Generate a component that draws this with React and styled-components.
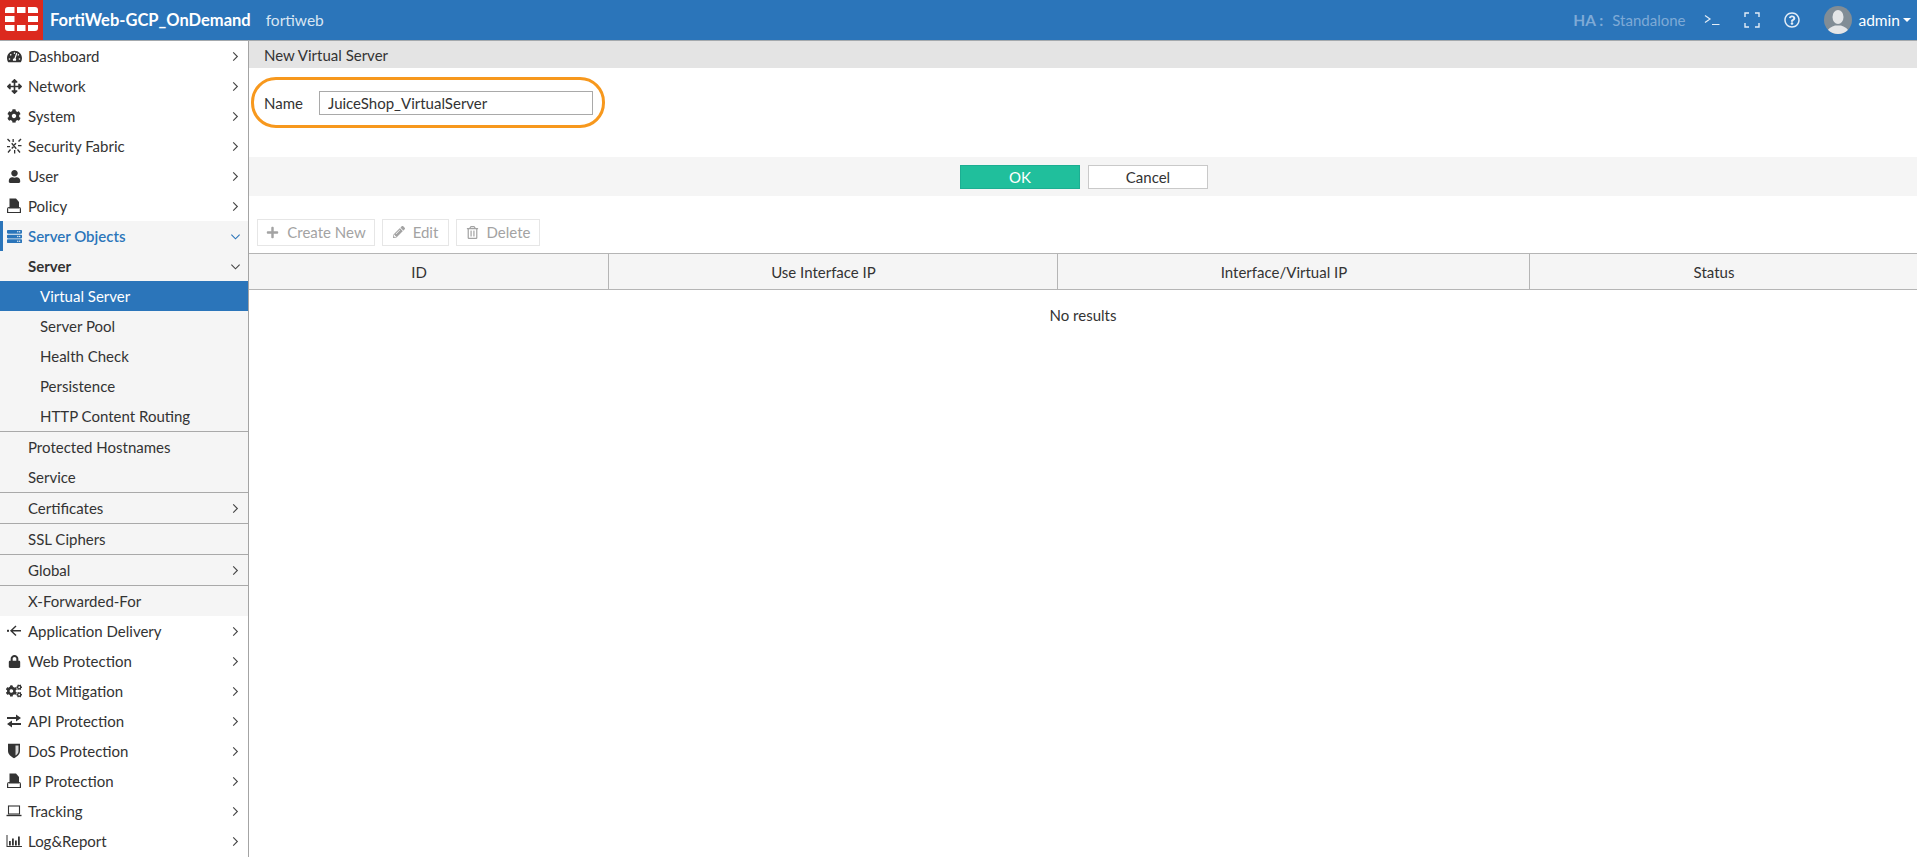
import React from 'react'
import styled, { createGlobalStyle } from 'styled-components'
import {
  FaTachometerAlt, FaArrowsAlt, FaCog, FaUser, FaServer, FaLock, FaCogs,
  FaPlus, FaPencilAlt, FaRegTrashAlt, FaRegQuestionCircle,
} from 'react-icons/fa'

const GlobalStyle = createGlobalStyle`
  html, body { margin: 0; padding: 0; height: 100%; background: #fff; }
  body { font-family: Lato, "Open Sans", sans-serif; font-size: 15px; color: #333; overflow: hidden; }
  * { box-sizing: border-box; }
`

const Page = styled.div`
  height: 100vh;
  display: flex;
  flex-direction: column;
`

const Header = styled.header`
  height: 41px;
  flex: none;
  display: flex;
  align-items: center;
  background: #2b75ba;
  border-bottom: 1px solid #a4a9ad;
  color: #fff;
`

const LogoBox = styled.div`
  width: 43px;
  height: 40px;
  padding-bottom: 2px;
  background: #dc291e;
  display: flex;
  align-items: center;
  justify-content: center;
`

const Title = styled.div`
  margin-left: 7px;
  font-size: 16.5px;
  font-weight: 700;
`

const Host = styled.div`
  margin-left: 15px;
  font-size: 15.500px;
  color: #d9e6f3;
`

const HeaderRight = styled.div`
  margin-left: auto;
  display: flex;
  align-items: center;
  padding-right: 6px;
`

const HaLabel = styled.span`
  font-weight: 700;
  color: #7eaad6;
  font-size: 15.500px;
`

const HaValue = styled.span`
  margin-left: 9px;
  color: #7eaad6;
  font-size: 15px;
`

const HeaderIcon = styled.span`
  display: flex;
  margin-left: ${p => p.$gap}px;
  color: #e3edf7;
`

const Avatar = styled.span`
  margin-left: 24px;
  width: 28px;
  height: 28px;
  border-radius: 50%;
  overflow: hidden;
  display: flex;
`

const AdminName = styled.span`
  margin-left: 6px;
  font-size: 15.500px;
  color: #fff;
`

const Caret = styled.span`
  margin-left: 3px;
  width: 0;
  height: 0;
  border-left: 4px solid transparent;
  border-right: 4px solid transparent;
  border-top: 4px solid #fff;
`

const Body = styled.div`
  flex: 1;
  min-height: 0;
  display: flex;
`

const Sidebar = styled.nav`
  width: 249px;
  flex: none;
  border-right: 1px solid #a4a4a4;
`

const Row = styled.div`
  height: ${p => (p.$divider ? 31 : 30)}px;
  display: flex;
  align-items: center;
  position: relative;
  padding-left: ${p => (p.$sub ? 40 : 6)}px;
  padding-right: 7px;
  color: ${p => (p.$active ? '#fff' : p.$open ? '#2b75ba' : '#333')};
  background: ${p => (p.$active ? '#2b75ba' : p.$shaded ? '#f5f5f5' : 'transparent')};
  border-top: ${p => (p.$divider ? '1px solid #a9a9a9' : 'none')};
  font-weight: ${p => (p.$strong ? 700 : p.$open ? 600 : 400)};
  font-size: 15px;
`

const Marker = styled.span`
  position: absolute;
  left: 0;
  top: 0;
  bottom: 0;
  width: 3px;
  background: #2b75ba;
`

const IconSlot = styled.span`
  width: 16px;
  height: 16px;
  margin-right: 6px;
  flex: none;
  display: flex;
  align-items: center;
  justify-content: center;
  color: ${p => (p.$open ? '#2b75ba' : '#333')};
`

const RowLabel = styled.span`
  flex: 1;
  padding-left: ${p => (p.$plain ? 22 : 0)}px;
`

const Main = styled.main`
  flex: 1;
  min-width: 0;
  display: flex;
  flex-direction: column;
`

const PageTitle = styled.div`
  height: 27px;
  background: #e4e4e4;
  padding-left: 15px;
  display: flex;
  align-items: center;
`

const Form = styled.div`
  height: 89px;
  padding: 23px 15px 0;
  position: relative;
`

const Field = styled.div`
  display: flex;
  align-items: center;
  height: 24px;
`

const FieldLabel = styled.label`
  width: 55px;
`

const NameInput = styled.input`
  width: 274px;
  height: 24px;
  border: 1px solid #a9a9a9;
  padding: 0 8px;
  font: inherit;
  color: #333;
  outline: none;
`

const Callout = styled.span`
  position: absolute;
  left: 2px;
  top: 9px;
  width: 354px;
  height: 51px;
  border: 3px solid #f7981d;
  border-radius: 25px;
  pointer-events: none;
`

const FormFooter = styled.div`
  height: 39px;
  background: #f5f5f5;
  display: flex;
  align-items: center;
  justify-content: center;
  gap: 8px;
  padding-left: 2px;
`

const FooterButton = styled.button`
  width: 120px;
  height: 24px;
  padding: 0;
  font: inherit;
  border: 1px solid ${p => (p.$primary ? '#1cae92' : '#c9c9c9')};
  background: ${p => (p.$primary ? '#20bf9c' : '#fff')};
  color: ${p => (p.$primary ? '#fff' : '#333')};
`

const Toolbar = styled.div`
  height: 57px;
  display: flex;
  gap: 7px;
  padding: 23px 0 0 8px;
`

const ToolButton = styled.div`
  height: 27px;
  width: ${p => p.$width}px;
  border: 1px solid #e6e6e6;
  padding-bottom: 1px;
  display: flex;
  align-items: center;
  justify-content: center;
  gap: 8px;
  color: #a3a3a3;
`

const TableHead = styled.div`
  height: 37px;
  display: grid;
  grid-template-columns: 360px 449px 472px 1fr;
  background: #f5f5f5;
  border-top: 1px solid #b5b5b5;
  border-bottom: 1px solid #b5b5b5;
`

const HeadCell = styled.div`
  display: flex;
  align-items: center;
  justify-content: center;
  padding-right: 19px;
  border-right: ${p => (p.$last ? 'none' : '1px solid #b5b5b5')};
`

const EmptyRow = styled.div`
  height: 50px;
  display: flex;
  align-items: center;
  justify-content: center;
`

const Chevron = ({ down, color = '#444' }) => (
  <svg width="11" height="11" viewBox="0 0 12 12" fill="none" stroke={color} strokeWidth="1.200">
    {down ? <path d="M1.500 4l4.500 4.500L10.500 4" /> : <path d="M3.500 1.500L8 6l-4.500 4.500" />}
  </svg>
)

const FabricIcon = () => (
  <svg width="16" height="16" viewBox="0 0 16 16" fill="#333">
    <path d="M1 1.500l1-1 2.500 2.500-1 1zM12 3l2.500-2.500 1 1L13 4zM6.500 1h1.300v3H6.500zM1 8h3v1.300H1zM12 7h3.500v1.300H12zM4 11l1 1-2.500 3-1-1zM11 12l1-1 2.500 3-1 1zM8 12h1.300v3.500H8z" />
    <path d="M5.200 5.800l1-1 4.600 5.400-1 1z" />
    <path d="M9.500 4.800l1 1-1.800 1.800-1-1zM7 8.200l1 1-1.800 1.800-1-1z" />
  </svg>
)

const PolicyIcon = () => (
  <svg width="16" height="16" viewBox="0 0 16 16">
    <path d="M3.500 0.500h6.500l3 3.500v6h-9.500z" fill="#333" />
    <path d="M1.600 11c0-1 .6-1.500 1.400-1.500h10c.8 0 1.400.5 1.400 1.500v3.500H1.600z" fill="#fff" stroke="#333" strokeWidth="1.200" />
    <path d="M3 9h10v1.500H3z" fill="#333" />
  </svg>
)

const DeliveryIcon = () => (
  <svg width="16" height="16" viewBox="0 0 16 16" fill="#333" stroke="#333">
    <rect x="1" y="6.800" width="2" height="2" stroke="none" />
    <path d="M5 7.800h10M10 3l-5 4.800 5 4.800" fill="none" strokeWidth="1.400" />
  </svg>
)

const TransferIcon = () => (
  <svg width="16" height="14" viewBox="0 0 16 14" fill="#333">
    <path d="M1 3h9V0.500L15 4l-5 3.500V5H1z" />
    <path d="M15 9H6V6.500L1 10l5 3.500V11h9z" />
  </svg>
)

const ShieldIcon = () => (
  <svg width="14" height="16" viewBox="0 0 14 16">
    <path d="M1 0.800h12v7.200c0 3.500-3.500 6-6 7.200-2.500-1.200-6-3.700-6-7.200z" fill="#333" />
    <path d="M8.500 2.500h3v5.500c0 2-1.500 3.500-3 4.500z" fill="#d8d8d8" />
  </svg>
)

const LaptopIcon = () => (
  <svg width="16" height="14" viewBox="0 0 16 14" fill="none" stroke="#333" strokeWidth="1.100">
    <rect x="2.500" y="2" width="11" height="8" />
    <path d="M0.500 11.500h15" strokeWidth="1.400" />
  </svg>
)

const ReportIcon = () => (
  <svg width="16" height="14" viewBox="0 0 16 14" fill="#333">
    <path d="M0.500 1h1v11h14.500v1H0.500z" />
    <path d="M3 7h1.800v4.500H3zM6 4.500h1.800v7H6zM9 6.500h1.800v5H9zM12 2.500h1.800v9H12z" />
  </svg>
)

const LogoMark = () => (
  <svg width="33" height="24" viewBox="0 0 33 24" fill="#fff">
    <path d="M3 0h6.500v6H0V3a3 3 0 0 1 3-3zM12 0h8.500v6H12zM23 0h7a3 3 0 0 1 3 3v3H23z" />
    <path d="M0 9h9.500v6H0zM23 9h10v6H23z" />
    <path d="M0 18h9.500v6H3a3 3 0 0 1-3-3zM12 18h8.500v6H12zM23 18h10v3a3 3 0 0 1-3 3h-7z" />
  </svg>
)

const TerminalIcon = () => (
  <svg width="16" height="12" viewBox="0 0 16 12" fill="none" stroke="currentColor" strokeWidth="1.200">
    <path d="M1 1.500L6 5 1 8.500M8 10.500h7.500" />
  </svg>
)

const FullscreenIcon = () => (
  <svg width="16" height="16" viewBox="0 0 16 16" fill="none" stroke="currentColor" strokeWidth="1.400">
    <path d="M1 5V1h4M11 1h4v4M15 11v4h-4M5 15H1v-4" />
  </svg>
)

const AvatarImage = () => (
  <svg width="28" height="28" viewBox="0 0 28 28">
    <rect width="28" height="28" fill="#818d96" />
    <ellipse cx="14" cy="11" rx="5.500" ry="7" fill="#e4e6e8" />
    <path d="M3 28c0-6 5-7 8-8.500h6c3 1.500 8 2.500 8 8.500z" fill="#e4e6e8" />
  </svg>
)

const navItems = [
  { label: 'Dashboard', icon: <FaTachometerAlt size={15} />, more: true },
  { label: 'Network', icon: <FaArrowsAlt size={15} />, more: true },
  { label: 'System', icon: <FaCog size={14} />, more: true },
  { label: 'Security Fabric', icon: <FabricIcon />, more: true },
  { label: 'User', icon: <FaUser size={13} />, more: true },
  { label: 'Policy', icon: <PolicyIcon />, more: true },
  { label: 'Server Objects', icon: <FaServer size={15} />, open: true, shaded: true },
  { label: 'Server', plain: true, strong: true, down: true, shaded: true },
  { label: 'Virtual Server', sub: true, active: true },
  { label: 'Server Pool', sub: true, shaded: true },
  { label: 'Health Check', sub: true, shaded: true },
  { label: 'Persistence', sub: true, shaded: true },
  { label: 'HTTP Content Routing', sub: true, shaded: true },
  { label: 'Protected Hostnames', plain: true, divider: true, shaded: true },
  { label: 'Service', plain: true, shaded: true },
  { label: 'Certificates', plain: true, divider: true, shaded: true, more: true },
  { label: 'SSL Ciphers', plain: true, divider: true, shaded: true },
  { label: 'Global', plain: true, divider: true, shaded: true, more: true },
  { label: 'X-Forwarded-For', plain: true, divider: true, shaded: true },
  { label: 'Application Delivery', icon: <DeliveryIcon />, more: true },
  { label: 'Web Protection', icon: <FaLock size={13} />, more: true },
  { label: 'Bot Mitigation', icon: <FaCogs size={16} />, more: true },
  { label: 'API Protection', icon: <TransferIcon />, more: true },
  { label: 'DoS Protection', icon: <ShieldIcon />, more: true },
  { label: 'IP Protection', icon: <PolicyIcon />, more: true },
  { label: 'Tracking', icon: <LaptopIcon />, more: true },
  { label: 'Log&Report', icon: <ReportIcon />, more: true },
]

const columns = ['ID', 'Use Interface IP', 'Interface/Virtual IP', 'Status']

function NavRow({ item }) {
  return (
    <Row
      $sub={item.sub}
      $active={item.active}
      $open={item.open}
      $shaded={item.shaded}
      $strong={item.strong}
      $divider={item.divider}
    >
      {item.open && <Marker />}
      {item.icon && <IconSlot $open={item.open}>{item.icon}</IconSlot>}
      <RowLabel $plain={item.plain}>{item.label}</RowLabel>
      {item.more && <Chevron />}
      {item.open && <Chevron down color="#2b75ba" />}
      {item.down && <Chevron down />}
    </Row>
  )
}

export default function App() {
  return (
    <Page>
      <GlobalStyle />
      <Header>
        <LogoBox><LogoMark /></LogoBox>
        <Title>FortiWeb-GCP_OnDemand</Title>
        <Host>fortiweb</Host>
        <HeaderRight>
          <HaLabel>HA :</HaLabel>
          <HaValue>Standalone</HaValue>
          <HeaderIcon $gap={19}><TerminalIcon /></HeaderIcon>
          <HeaderIcon $gap={24}><FullscreenIcon /></HeaderIcon>
          <HeaderIcon $gap={24}><FaRegQuestionCircle size={16} /></HeaderIcon>
          <Avatar><AvatarImage /></Avatar>
          <AdminName>admin</AdminName>
          <Caret />
        </HeaderRight>
      </Header>
      <Body>
        <Sidebar>
          {navItems.map(item => <NavRow key={item.label} item={item} />)}
        </Sidebar>
        <Main>
          <PageTitle>New Virtual Server</PageTitle>
          <Form>
            <Field>
              <FieldLabel>Name</FieldLabel>
              <NameInput readOnly value="JuiceShop_VirtualServer" />
            </Field>
            <Callout />
          </Form>
          <FormFooter>
            <FooterButton $primary>OK</FooterButton>
            <FooterButton>Cancel</FooterButton>
          </FormFooter>
          <Toolbar>
            <ToolButton $width={118}><FaPlus size={13} />Create New</ToolButton>
            <ToolButton $width={67}><FaPencilAlt size={12} />Edit</ToolButton>
            <ToolButton $width={84}><FaRegTrashAlt size={13} />Delete</ToolButton>
          </Toolbar>
          <TableHead>
            {columns.map((c, i) => <HeadCell key={c} $last={i === columns.length - 1}>{c}</HeadCell>)}
          </TableHead>
          <EmptyRow>No results</EmptyRow>
        </Main>
      </Body>
    </Page>
  )
}
